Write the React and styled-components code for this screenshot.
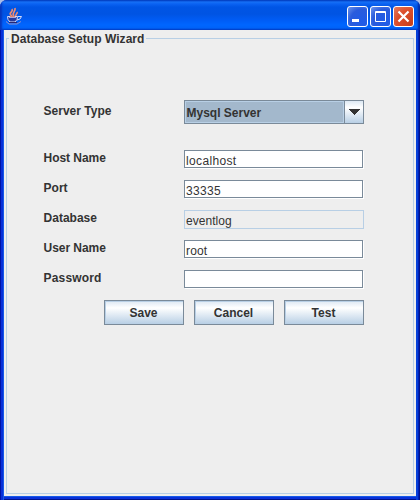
import React from "react";
import styled, { createGlobalStyle } from "styled-components";

const Global = createGlobalStyle`
  * { box-sizing: border-box; }
  body { margin: 0; background: #a9bde8; font: bold 12px/14px "Liberation Sans", Arial, sans-serif; color: #333; overflow: hidden; }
`;

const Window = styled.main`
  width: 420px;
  height: 500px;
  display: flex;
  flex-direction: column;
  border-radius: 7px 7px 0 0;
  overflow: hidden;
  background: #0831d9;
`;

const TitleBar = styled.header`
  height: 30px;
  flex: none;
  display: flex;
  align-items: flex-start;
  padding: 6px 6px 0;
  background: linear-gradient(#0450cf 0, #1670f5 2px, #0a62f2 4px, #0055e5 7px, #0054e3 14px, #005cf5 20px, #0066ff 25px, #0062f8 28px, #0050dd 30px);
  box-shadow: inset 2px 0 2px #0636bd, inset -2px 0 2px #0027a5;
`;

const WindowButtons = styled.div`
  display: flex;
  gap: 2px;
  margin-left: auto;
`;

const WindowButton = styled.button`
  width: 21px;
  height: 21px;
  padding: 0;
  border: 1px solid #fff;
  border-radius: 3px;
  display: grid;
  place-items: center;
  background: ${(p) => p.$close
    ? "radial-gradient(circle at 90% 90%, #c8401c, #dc4e2b 60%, #e57d62)"
    : "radial-gradient(circle at 75% 75%, #1f5be8, #2a5cdc 60%, #6f96ec)"};
`;

const Frame = styled.div`
  flex: 1;
  display: flex;
  border: solid transparent;
  border-width: 0 4px 4px;
  background: linear-gradient(90deg, #0013a8 0 1px, #0831d9 1px 3px, #1659e8 3px 4px, #eee 4px 416px, #0741d9 416px 418px, #0020b8 418px 419px, #00138c 419px);
  background-origin: border-box;
`;

const Content = styled.div`
  flex: 1;
  padding: 1px 2px 2px;
  background: #eee;
  box-shadow: 0 1px #1659e8, 0 3px #0831d9, 0 4px #00138c;
`;

const Group = styled.fieldset`
  height: 463px;
  margin: 0;
  padding: 55px 0 0 36px;
  border: 1px solid #b8cfe5;
  min-width: 0;
`;

const Legend = styled.legend`
  height: 14px;
  margin-left: -34px;
  padding: 0 2px;
  line-height: 16px;
  letter-spacing: 0.04px;
`;

const Row = styled.div`
  display: grid;
  grid-template-columns: 141px 180px;
  height: ${(p) => p.$height || 30}px;
  align-items: start;
`;

const Label = styled.label`
  padding: ${(p) => p.$top || 1}px 0 0 0.6px;
  letter-spacing: ${(p) => p.$spacing || 0}px;
`;

const Select = styled.div`
  height: 24px;
  display: flex;
  border: 1px solid #7a8a99;
`;

const Selected = styled.div`
  flex: 1;
  border: 1px solid #b8cfe5;
  background: #a3b8cc;
  padding: 4px 0.5px;
`;

const Arrow = styled.div`
  width: 19px;
  display: grid;
  place-items: center;
  border-left: 1px solid #7a8a99;
  background: linear-gradient(#dde8f3, #fff 30%, #b8cfe5);
`;

const Field = styled.input`
  width: ${(p) => (p.disabled ? 180 : 179)}px;
  height: ${(p) => (p.disabled ? 19 : 18)}px;
  padding: ${(p) => (p.disabled ? 3 : 4)}px 1px 0;
  border: 1px solid ${(p) => (p.disabled ? "#b8cfe5" : "#7a8a99")};
  border-radius: 0;
  outline: 0;
  background: ${(p) => (p.disabled ? "#eee" : "#fff")};
  box-shadow: ${(p) => (p.disabled ? "none" : "1px 1px #fff")};
  color: #333;
  font: 12px/14px "Liberation Sans", Arial, sans-serif;
  letter-spacing: ${(p) => p.$spacing}px;
`;

const Actions = styled.div`
  display: flex;
  gap: 10px;
  margin-left: 61px;
`;

const Action = styled.button`
  width: 80px;
  height: 25px;
  padding: 1px 1px 0 0;
  border: 1px solid #7a8a99;
  box-shadow: inset 1px 1px #b8cfe5;
  background: linear-gradient(#dde8f3, #fff 30%, #b8cfe5);
  color: #333;
  font: bold 12px/14px "Liberation Sans", Arial, sans-serif;
`;

const fields = [
  { label: "Host Name", value: "localhost", labelSpacing: -0.05, spacing: 0.35 },
  { label: "Port", value: "33335", spacing: 0.3 },
  { label: "Database", value: "eventlog", disabled: true, spacing: 0.05 },
  { label: "User Name", value: "root", labelSpacing: -0.05, spacing: 0.15 },
  { label: "Password", value: "", labelSpacing: 0.15, spacing: 0 },
];

const IconSvg = styled.svg`
  margin-top: 1px;
`;

function JavaIcon() {
  return (
    <IconSvg width="17" height="19" viewBox="0 0 17 19" fill="none">
      <path d="M6 9C1 6 8 5 6 2M8 9c-3-3 2-4 1-8M10 9c-1-2 2-2 1-4" stroke="#ef8c70" strokeWidth="1.7" />
      <path d="M1.500 9.500h10l-.5 3-2 2.500H4l-2-2.500z" fill="#283a9c" stroke="#d5d9f5" />
      <path d="M12 9.500h3.500l-1.500 2.500-3 1" stroke="#d5d9f5" />
      <path d="M3 10.500h7" stroke="#a8a8e0" />
      <path d="M4 9.500h5" stroke="#e78670" />
      <path d="M0 14.500l3 2.500h8l4-2.500" stroke="#8f91c9" />
      <path d="M3 15.500h8" stroke="#252774" />
    </IconSvg>
  );
}

export default function App() {
  return (
    <>
      <Global />
      <Window>
        <TitleBar>
          <JavaIcon />
          <WindowButtons>
            <WindowButton aria-label="Minimize"><svg width="19" height="19"><path d="M4 12h7v3H4z" fill="#fff" /></svg></WindowButton>
            <WindowButton aria-label="Maximize"><svg width="19" height="19" fill="none" stroke="#fff"><path d="M4.500 4.500h10v10h-10zM4 5.500h11" /></svg></WindowButton>
            <WindowButton $close aria-label="Close"><svg width="19" height="19"><path d="M4.500 4.500l10 10m0-10l-10 10" stroke="#fff" strokeWidth="2.200" /></svg></WindowButton>
          </WindowButtons>
        </TitleBar>
        <Frame>
          <Content>
            <Group>
              <Legend>Database Setup Wizard</Legend>
              <Row $height={50}>
                <Label $top={4}>Server Type</Label>
                <Select>
                  <Selected>Mysql Server</Selected>
                  <Arrow><svg width="11" height="6" shapeRendering="crispEdges"><path d="M0 0h11L5.500 6z" fill="#333" /></svg></Arrow>
                </Select>
              </Row>
              {fields.map(({ label, value, disabled, labelSpacing, spacing }) => (
                <Row key={label}>
                  <Label $spacing={labelSpacing}>{label}</Label>
                  <Field aria-label={label} defaultValue={value} disabled={disabled} $spacing={spacing} />
                </Row>
              ))}
              <Actions>
                {["Save", "Cancel", "Test"].map((t) => <Action key={t}>{t}</Action>)}
              </Actions>
            </Group>
          </Content>
        </Frame>
      </Window>
    </>
  );
}
